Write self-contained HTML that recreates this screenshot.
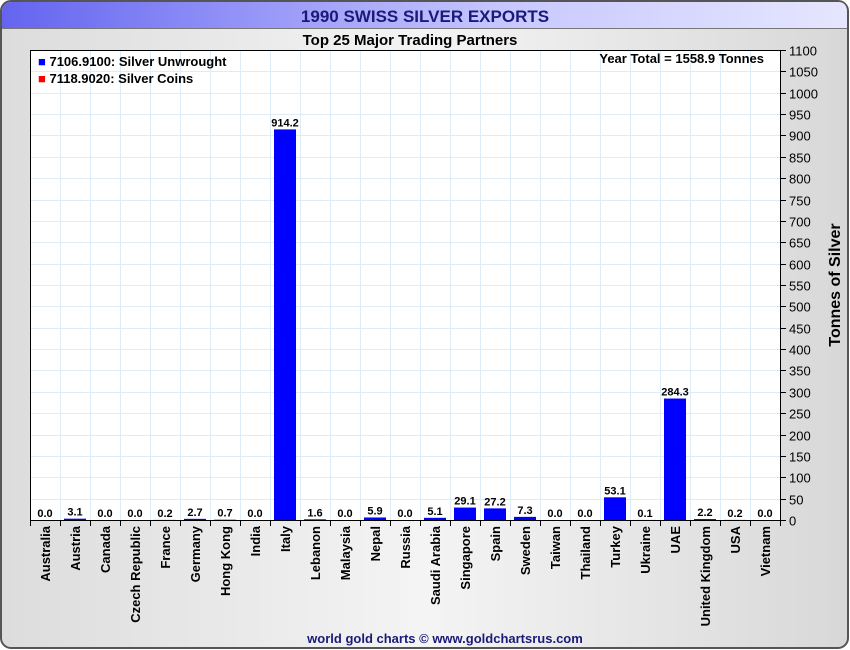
<!DOCTYPE html><html><head><style>body{margin:0;background:#fff}svg{display:block;font-family:"Liberation Sans",Arial,sans-serif}</style></head><body>
<svg width="850" height="650" viewBox="0 0 850 650" xmlns="http://www.w3.org/2000/svg">
<defs>
<linearGradient id="bg" x1="0" x2="1"><stop offset="0" stop-color="#dcdcdc"/><stop offset="0.5" stop-color="#f4f4f4"/><stop offset="1" stop-color="#d8d8d8"/></linearGradient>
<linearGradient id="tb" x1="0" x2="1"><stop offset="0" stop-color="#6464f0"/><stop offset="0.6" stop-color="#c8c8ff"/><stop offset="1" stop-color="#e6e6ff"/></linearGradient>
</defs>
<rect x="1" y="1" width="847" height="647" rx="10" fill="url(#bg)" stroke="#555" stroke-width="2"/>
<path d="M2 28 V12 Q2 2 12 2 H838 Q847 2 847 12 V28 Z" fill="url(#tb)"/>
<line x1="2" y1="28.5" x2="847" y2="28.5" stroke="#777"/>
<text x="425" y="22" text-anchor="middle" font-size="17" font-weight="bold" fill="#1a1a7a">1990 SWISS SILVER EXPORTS</text>
<text x="410" y="45" text-anchor="middle" font-size="15" font-weight="bold" fill="#000">Top 25 Major Trading Partners</text>
<rect x="30" y="50" width="750" height="470" fill="#fff"/>
<g stroke="#dcecf8" stroke-width="1" id="grid"></g>
<g id="bars"></g>
<rect x="30.5" y="50.5" width="750" height="470" fill="none" stroke="#000"/>
<text x="38" y="66" font-size="13" font-weight="bold"><tspan fill="#00f">■</tspan> 7106.9100: Silver Unwrought</text>
<text x="38" y="83" font-size="13" font-weight="bold"><tspan fill="#f00">■</tspan> 7118.9020: Silver Coins</text>
<text x="764" y="63" text-anchor="end" font-size="13" font-weight="bold">Year Total = 1558.9 Tonnes</text>
<text transform="translate(840,285) rotate(-90)" text-anchor="middle" font-size="16" font-weight="bold">Tonnes of Silver</text>
<text x="445" y="643" text-anchor="middle" font-size="13" font-weight="bold" fill="#1a1a7a">world gold charts © www.goldchartsrus.com</text>
<g id="axis"></g>
</svg>
<script>
var ns="http://www.w3.org/2000/svg",s=0.42727;
function el(p,t,a,tx){var e=document.createElementNS(ns,t);for(var k in a)e.setAttribute(k,a[k]);if(tx!=null)e.textContent=tx;document.getElementById(p).appendChild(e);}
for(var i=1;i<25;i++){var x=30.5+i*30;el("grid","line",{x1:x,y1:50,x2:x,y2:520});}
for(var v=50;v<1100;v+=50){var y=Math.round(520-v*s)+.5;el("grid","line",{x1:30,y1:y,x2:780,y2:y});}
var d=[["Australia",0],["Austria",3.1],["Canada",0],["Czech Republic",0],["France",0.2],["Germany",2.7],["Hong Kong",0.7],["India",0],["Italy",914.2],["Lebanon",1.6],["Malaysia",0],["Nepal",5.9],["Russia",0],["Saudi Arabia",5.1],["Singapore",29.1],["Spain",27.2],["Sweden",7.3],["Taiwan",0],["Thailand",0],["Turkey",53.1],["Ukraine",0.1],["UAE",284.3],["United Kingdom",2.2],["USA",0.2],["Vietnam",0]];
d.forEach(function(r,i){var c=45+i*30,h=r[1]*s,t=520-h;
if(h>0)el("bars","rect",{x:c-11,y:t,width:22,height:Math.max(h,1),fill:"#00f"});
el("bars","text",{x:c,y:t-3,"text-anchor":"middle","font-size":"11","font-weight":"bold"},r[1].toFixed(1));
el("axis","text",{transform:"translate("+(c+5)+",526) rotate(-90)","text-anchor":"end","font-size":"13","font-weight":"bold"},r[0]);
});
for(var i=0;i<=25;i++){var x=30.5+i*30;el("axis","line",{x1:x,y1:520,x2:x,y2:526,stroke:"#000"});}
for(var v=0;v<=1100;v+=50){var y=Math.round(520-v*s)+.5;el("axis","line",{x1:780,y1:y,x2:786,y2:y,stroke:"#000"});el("axis","text",{x:789,y:y+5,"font-size":"13"},v);}
</script>
</body></html>
